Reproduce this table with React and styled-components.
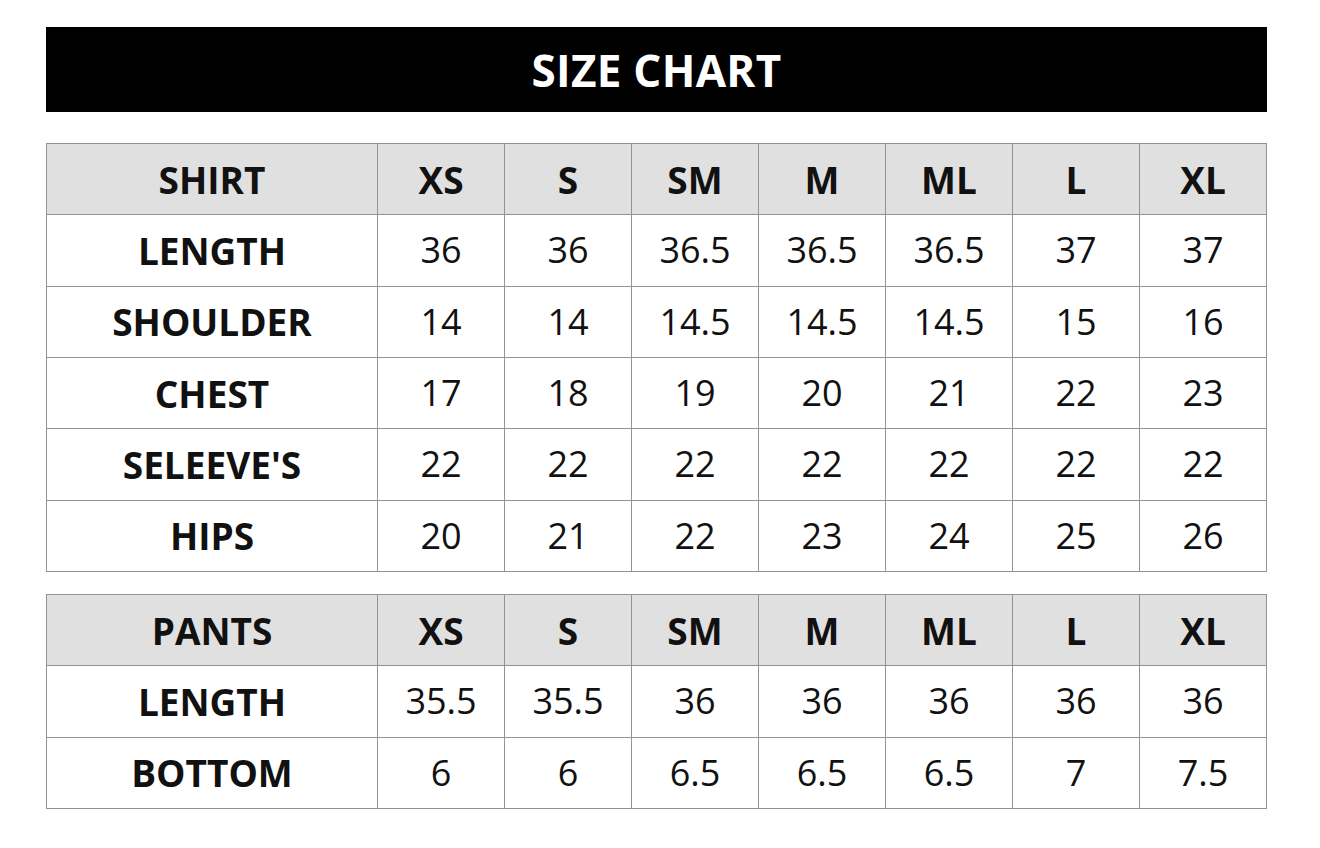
import React from "react";
import styled, { createGlobalStyle } from "styled-components";

const GlobalStyle = createGlobalStyle`
	body {
		margin: 0;
		background: #fff;
		font-family: "Open Sans", "Noto Sans", sans-serif;
		color: #111;
	}
`;

const Page = styled.div`
	width: 1221px;
	padding: 27px 0 0 46px;
	display: flex;
	flex-direction: column;
`;

const Banner = styled.h1`
	margin: 0 0 31px;
	height: 85px;
	background: #000;
	color: #fff;
	font-size: 44px;
	font-weight: 700;
	display: flex;
	align-items: center;
	justify-content: center;
	letter-spacing: 0.3px;
`;

const Table = styled.table`
	width: 1221px;
	border-collapse: collapse;
	table-layout: fixed;
	margin-bottom: ${(p) => p.$gap || 0}px;
	col.label {
		width: 331px;
	}
	td,
	th {
		border: 1px solid #939393;
		height: 70.33px;
		padding: 0;
		text-align: center;
		vertical-align: middle;
		line-height: 1;
	}
`;

const HeadCell = styled.th`
	background: #e0e0e0;
	font-size: 37px;
	font-weight: 700;
`;

const LabelCell = styled.td`
	font-size: 37px;
	font-weight: 700;
`;

const ValueCell = styled.td`
	font-size: 36px;
	font-weight: 400;
`;

const sizes = ["XS", "S", "SM", "M", "ML", "L", "XL"];

const shirt = [
	["LENGTH", "36", "36", "36.5", "36.5", "36.5", "37", "37"],
	["SHOULDER", "14", "14", "14.5", "14.5", "14.5", "15", "16"],
	["CHEST", "17", "18", "19", "20", "21", "22", "23"],
	["SELEEVE'S", "22", "22", "22", "22", "22", "22", "22"],
	["HIPS", "20", "21", "22", "23", "24", "25", "26"],
];

const pants = [
	["LENGTH", "35.5", "35.5", "36", "36", "36", "36", "36"],
	["BOTTOM", "6", "6", "6.5", "6.5", "6.5", "7", "7.5"],
];

function SizeTable({ title, rows, gap }) {
	return (
		<Table $gap={gap}>
			<colgroup>
				<col className="label" />
				{sizes.map((s) => (
					<col key={s} />
				))}
			</colgroup>
			<thead>
				<tr>
					<HeadCell>{title}</HeadCell>
					{sizes.map((s) => (
						<HeadCell key={s}>{s}</HeadCell>
					))}
				</tr>
			</thead>
			<tbody>
				{rows.map(([label, ...vals]) => (
					<tr key={label}>
						<LabelCell>{label}</LabelCell>
						{vals.map((v, i) => (
							<ValueCell key={i}>{v}</ValueCell>
						))}
					</tr>
				))}
			</tbody>
		</Table>
	);
}

export default function App() {
	return (
		<>
			<GlobalStyle />
			<Page>
				<Banner>SIZE CHART</Banner>
				<SizeTable title="SHIRT" rows={shirt} gap={22} />
				<SizeTable title="PANTS" rows={pants} />
			</Page>
		</>
	);
}
